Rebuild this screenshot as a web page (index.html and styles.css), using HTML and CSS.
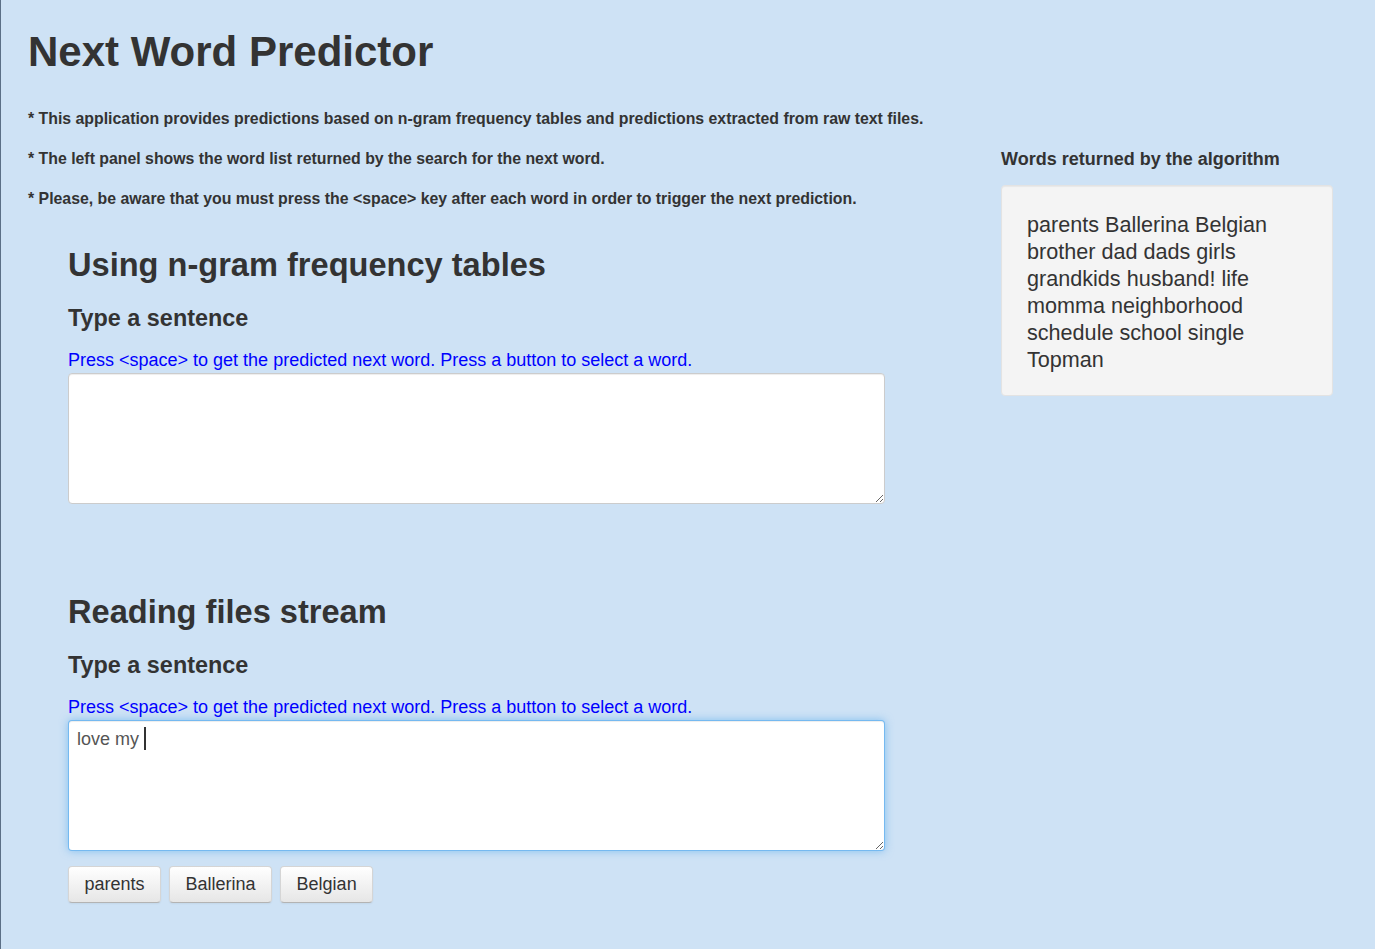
FILE: index.html
```html
<!DOCTYPE html>
<html lang="en">
<head>
<meta charset="utf-8">
<title>Next Word Predictor</title>
<link rel="stylesheet" href="styles.css">
</head>
<body>
<div class="page">
  <h1 class="title">Next Word Predictor</h1>
  <div class="row">
    <div class="main">
      <p class="note">* This application provides predictions based on n-gram frequency tables and predictions extracted from raw text files.</p>
      <p class="note">* The left panel shows the word list returned by the search for the next word.</p>
      <p class="note">* Please, be aware that you must press the &lt;space&gt; key after each word in order to trigger the next prediction.</p>
      <div class="section">
        <h2 class="sec-title">Using n-gram frequency tables</h2>
        <h3 class="sub-title">Type a sentence</h3>
        <p class="hint">Press &lt;space&gt; to get the predicted next word. Press a button to select a word.</p>
        <textarea class="box"></textarea>
      </div>
      <div class="section second">
        <h2 class="sec-title">Reading files stream</h2>
        <h3 class="sub-title">Type a sentence</h3>
        <p class="hint">Press &lt;space&gt; to get the predicted next word. Press a button to select a word.</p>
        <div class="box focused" role="textbox">love my <span class="caret"></span></div>
        <div class="buttons">
          <button class="btn">parents</button>
          <button class="btn">Ballerina</button>
          <button class="btn">Belgian</button>
        </div>
      </div>
    </div>
    <div class="side">
      <h4 class="side-title">Words returned by the algorithm</h4>
      <div class="well">parents Ballerina Belgian brother dad dads girls grandkids husband! life momma neighborhood schedule school single Topman</div>
    </div>
  </div>
</div>
</body>
</html>
```

FILE: styles.css
```css
html, body {
  margin: 0;
  padding: 0;
}
body {
  background: #cee2f5;
  font-family: "Liberation Sans", Arial, sans-serif;
  color: #333;
  border-left: 1px solid #5b6f86;
  min-height: 949px;
  box-sizing: border-box;
}
.page {
  padding: 0 0 0 27px;
}
.title {
  margin: 0;
  padding-top: 26px;
  font-size: 42px;
  line-height: 52px;
  font-weight: bold;
}
.row {
  display: flex;
  align-items: flex-start;
}
.main {
  width: 973px;
  flex: none;
}
.note {
  margin: 0;
  font-size: 15.85px;
  font-weight: bold;
  line-height: 20px;
}
.note:first-child {
  margin-top: 31px;
}
.note + .note {
  margin-top: 20px;
}
.section {
  padding-left: 40px;
  width: 817px;
}
.sec-title {
  margin: 0;
  margin-top: 36px;
  font-size: 32.6px;
  line-height: 40px;
}
.second .sec-title {
  margin-top: 88px;
}
.sub-title {
  margin: 19px 0 0;
  font-size: 23.4px;
  line-height: 28px;
}
.hint {
  margin: 18px 0 0;
  font-size: 18px;
  line-height: 20px;
  color: #0000ff;
}
.box {
  display: block;
  box-sizing: border-box;
  width: 817px;
  height: 131px;
  margin: 3px 0 0;
  padding: 6px 8px;
  background: #fff;
  border: 1px solid #ccc;
  border-radius: 4px;
  box-shadow: inset 0 1px 1px rgba(0,0,0,0.075);
  font-family: "Liberation Sans", Arial, sans-serif;
  font-size: 18px;
  line-height: 25px;
  color: #555;
  resize: vertical;
  overflow: auto;
}
.box.focused {
  border-color: rgba(82,168,236,0.8);
  box-shadow: inset 0 1px 1px rgba(0,0,0,0.075), 0 0 8px rgba(82,168,236,0.6);
}
.caret {
  display: inline-block;
  width: 2px;
  height: 23px;
  background: #333;
  vertical-align: -5px;
}
.buttons {
  display: flex;
  gap: 8px;
  margin-top: 15px;
}
.btn {
  height: 37px;
  padding: 0 15.5px;
  font-family: "Liberation Sans", Arial, sans-serif;
  font-size: 18px;
  color: #333;
  background: linear-gradient(#ffffff, #e6e6e6);
  border: 1px solid #d5d5d5;
  border-bottom-color: #b3b3b3;
  border-radius: 4px;
  box-shadow: inset 0 1px 0 rgba(255,255,255,0.2), 0 1px 2px rgba(0,0,0,0.05);
}
.side {
  width: 332px;
  flex: none;
}
.side-title {
  margin: 70px 0 0;
  font-size: 18px;
  line-height: 22px;
  font-weight: bold;
}
.well {
  margin-top: 15px;
  box-sizing: border-box;
  height: 211px;
  padding: 25px 40px 24px 25px;
  background: #f4f4f4;
  border: 1px solid #e3e3e3;
  border-radius: 4px;
  box-shadow: inset 0 1px 1px rgba(0,0,0,0.05);
  font-size: 21.6px;
  line-height: 27px;
  color: #333;
}
```
